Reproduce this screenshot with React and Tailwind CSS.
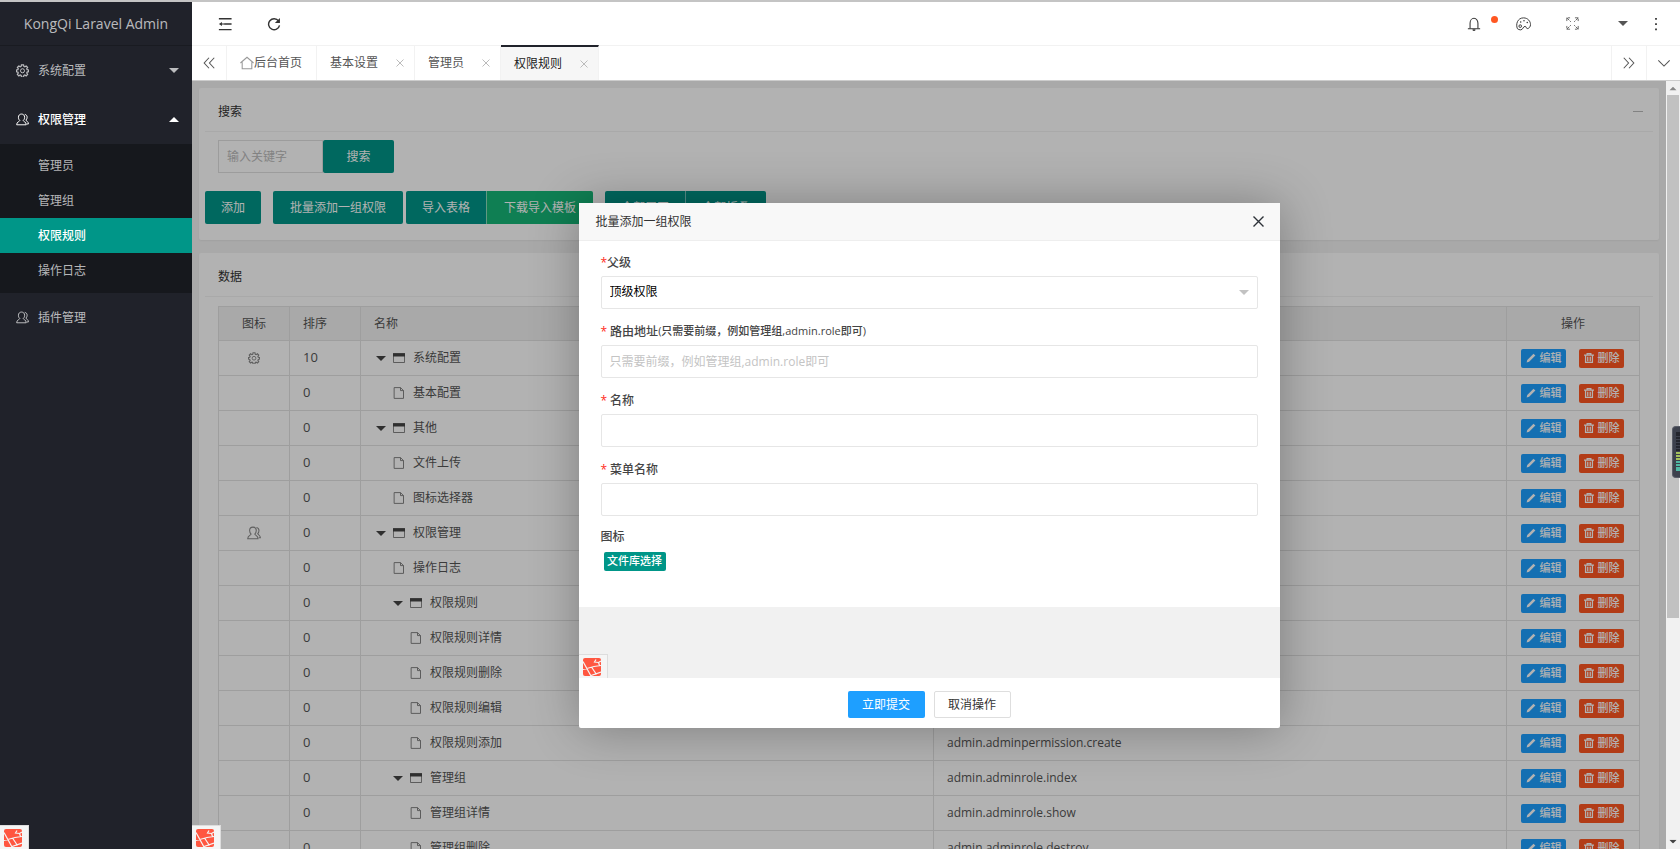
import { useState } from "react";

const menus = [
  { name: "系统配置", icon: "gear", children: [] },
  {
    name: "权限管理",
    icon: "user",
    open: true,
    children: ["管理员", "管理组", "权限规则", "操作日志"],
  },
  { name: "插件管理", icon: "user" },
];

const tabs = ["基本设置", "管理员", "权限规则"];

const rows = [
  { name: "系统配置", sort: 10, level: 0, folder: true, icon: "gear", route: "admin.config" },
  { name: "基本配置", sort: 0, level: 0, route: "admin.config.index" },
  { name: "其他", sort: 0, level: 0, folder: true, route: "admin.other" },
  { name: "文件上传", sort: 0, level: 0, route: "admin.upload" },
  { name: "图标选择器", sort: 0, level: 0, route: "admin.icon" },
  { name: "权限管理", sort: 0, level: 0, folder: true, icon: "user", route: "admin.permission" },
  { name: "操作日志", sort: 0, level: 0, route: "admin.log.index" },
  { name: "权限规则", sort: 0, level: 1, folder: true, route: "admin.adminpermission.index" },
  { name: "权限规则详情", sort: 0, level: 1, route: "admin.adminpermission.show" },
  { name: "权限规则删除", sort: 0, level: 1, route: "admin.adminpermission.destroy" },
  { name: "权限规则编辑", sort: 0, level: 1, route: "admin.adminpermission.edit" },
  { name: "权限规则添加", sort: 0, level: 1, route: "admin.adminpermission.create" },
  { name: "管理组", sort: 0, level: 1, folder: true, route: "admin.adminrole.index" },
  { name: "管理组详情", sort: 0, level: 1, route: "admin.adminrole.show" },
  { name: "管理组删除", sort: 0, level: 1, route: "admin.adminrole.destroy" },
];

function Svg({ size = 14, className = "", children }) {
  return (
    <svg
      width={size}
      height={size}
      viewBox="0 0 16 16"
      fill="none"
      stroke="currentColor"
      strokeWidth="1.2"
      className={`shrink-0 ${className}`}
      aria-hidden="true"
    >
      {children}
    </svg>
  );
}

function GearIcon({ size, className }) {
  return (
    <Svg size={size} className={className}>
      <path
        d="M6.7 1h2.6l.4 2 1.1.5 1.7-1.1 1.8 1.8-1.1 1.7.5 1.1 1.8.3v2.2l-1.8.4-.5 1.2 1.1 1.7-1.8 1.8-1.7-1.1-1.1.5-.4 2H6.7l-.4-2-1.1-.5-1.7 1.1-1.8-1.8 1.1-1.7-.5-1.2L.6 9.5V7.3l1.7-.3.5-1.1-1.1-1.7 1.8-1.8 1.7 1.1L6.3 3z"
        strokeWidth="1.5"
      />
      <circle cx="8" cy="8.3" r="2.5" />
    </Svg>
  );
}

function UserIcon({ size, className }) {
  return (
    <Svg size={size} className={className}>
      <path d="M4.7 9.2C3.4 8.2 3 6.8 3 5.2 3 2.8 4.6 1.3 6.8 1.3s3.8 1.5 3.8 3.9c0 1.6-.4 3-1.7 4 0 1.3 3.7 1.5 3.7 5.3H.8c0-3.8 3.9-4 3.9-5.3z" />
      <path d="M10.8 1.7c1.8.3 2.9 1.7 2.9 3.5 0 1.5-.5 2.7-1.5 3.5 0 1.2 3.1 1.4 3.1 4.8h-2" />
    </Svg>
  );
}

function Caret({ up, className = "" }) {
  return (
    <svg width="10" height="5" viewBox="0 0 10 5" fill="currentColor" className={`shrink-0 ${className}`} aria-hidden="true">
      <path d={up ? "M0 5h10L5 0z" : "M0 0h10L5 5z"} />
    </svg>
  );
}

function FolderIcon() {
  return (
    <Svg size={12} className="text-[#777]">
      <path d="M.6 3h14.8v11H.6z" />
      <path d="M0 1.5h16V6H0z" fill="#444" stroke="none" />
    </Svg>
  );
}

function FileIcon() {
  return (
    <Svg size={12} className="text-[#777]">
      <path d="M1.5.8h8.5l4 4v10.4H1.5z" />
      <path d="M10 .8v4h4" />
    </Svg>
  );
}

function TabClose() {
  return (
    <svg width="8" height="8" viewBox="0 0 8 8" fill="none" stroke="currentColor" aria-hidden="true">
      <path d="M.5.5l7 7M7.5.5l-7 7" />
    </svg>
  );
}

function DoubleChevron({ right }) {
  return (
    <Svg size={14}>
      <path d={right ? "M2 2l5.5 6L2 14M8 2l5.5 6L8 14" : "M8 2L2.5 8 8 14M14 2L8.5 8l5.5 6"} />
    </Svg>
  );
}

function LaravelBadge() {
  return (
    <a href="#debug" aria-label="debug" className="block border-t border-r border-[#ddd] bg-[#f5f5f5] pt-[3px] pr-[6px] pb-[2px] pl-1">
      <svg width="18" height="18" viewBox="0 0 18 18" aria-hidden="true">
        <rect width="18" height="18" rx="2" fill="#ff5640" />
        <path
          d="M0 3.5L8 18M0 11.5l11-3 7-1M8.500 9l5 7.500M13 1.500L11.500 4l4 .5L18 3M8 17.500l10-3.500M15.500 4.500l1 3"
          fill="none"
          stroke="#f5f5f5"
          strokeWidth="1.2"
        />
      </svg>
    </a>
  );
}

function Sidebar() {
  return (
    <aside className="relative flex w-48 shrink-0 flex-col bg-[#20222a] text-white/70">
      <div className="flex h-11 items-center justify-center border-b border-black/20 text-sm">
        KongQi Laravel Admin
      </div>
      <nav>
        {menus.map((m) => (
          <div key={m.name}>
            <button className={`flex h-[49px] w-full items-center gap-[9px] pr-[13px] pl-4 ${m.open ? "font-medium text-white" : ""}`}>
              {m.icon === "gear" ? <GearIcon size={13} /> : <UserIcon size={13} />}
              {m.name}
              {m.children && <Caret up={m.open} className="ml-auto" />}
            </button>
            {m.open && (
              <div className="bg-[#16181d] pt-1 pb-[5px]">
                {m.children.map((c) => (
                  <a
                    key={c}
                    href="#menu"
                    className={`flex h-[35px] items-center pl-[38px] ${c === "权限规则" ? "bg-[#009688] font-medium text-white" : ""}`}
                  >
                    {c}
                  </a>
                ))}
              </div>
            )}
          </div>
        ))}
      </nav>
      <div className="absolute bottom-0 left-0">
        <LaravelBadge />
      </div>
    </aside>
  );
}

function Header() {
  return (
    <header className="flex h-11 shrink-0 items-center justify-between border-b border-[#f2f2f2] pr-[17px] pl-[26px] text-[#333]">
      <div className="flex items-center gap-[35px]">
        <button aria-label="收起菜单">
          <Svg size={14}>
            <path d="M1 2h14.5M7 8h8.5M1 14.5h14.5" strokeWidth="1.5" />
            <path d="M1 8l3.5-2.3v4.6z" fill="currentColor" stroke="none" />
            <path d="M4 8h3" />
          </Svg>
        </button>
        <button aria-label="刷新">
          <Svg size={14}>
            <path d="M13.2 4.5A6.3 6.3 0 1 0 14.3 9.5" strokeWidth="1.6" />
            <path d="M14.8 1v5.8H9z" fill="currentColor" stroke="none" />
          </Svg>
        </button>
      </div>
      <div className="flex items-center">
        <button aria-label="消息" className="relative mr-[35px]">
          <Svg size={14}>
            <path d="M3.5 13V7a4.5 5.5 0 0 1 9 0v6" />
            <path d="M1 13.5h14M6.5 14.5q1.5 1.5 3 0" />
          </Svg>
          <span className="absolute -top-px -right-[17px] size-[7px] rounded-full bg-[#ff5722]" />
        </button>
        <button aria-label="主题" className="mr-[35px]">
          <Svg size={15}>
            <path
              d="M1.5 13.5C-.5 9 1.5 2 8 2c5 0 7.5 4 7.5 7.2 0 2.300-1.800 4.300-3.500 4.200-1.500-.2-.8-2.300-2.300-2.400C7.500 11 7.500 14.800 5 14.800c-1.500 0-2.500-.5-3.500-1.300z"
              strokeWidth="1"
            />
            <circle cx="5" cy="6.5" r=".8" fill="currentColor" stroke="none" />
            <circle cx="8.500" cy="5" r=".8" fill="currentColor" stroke="none" />
            <circle cx="12" cy="7" r=".8" fill="currentColor" stroke="none" />
            <circle cx="4.5" cy="10.8" r="1.4" strokeWidth="1" />
          </Svg>
        </button>
        <button aria-label="全屏" className="mr-[39px] text-[#666]">
          <Svg size={13}>
            <path d="M1 5V1h4M11 1h4v4M15 11v4h-4M5 15H1v-4M1 1l5 5M15 1l-5 5M15 15l-5-5M1 15l5-5" strokeDasharray="4 1" />
          </Svg>
        </button>
        <button aria-label="用户" className="mr-[21px] text-[#555]">
          <Caret />
        </button>
        <button aria-label="更多" className="w-[14px]">
          <Svg size={14}>
            <path d="M7 2h2M7 8h2M7 14h2" strokeWidth="2" />
          </Svg>
        </button>
      </div>
    </header>
  );
}

function TabBar() {
  return (
    <div className="flex h-[35px] shrink-0 items-stretch border-b border-[#ccc] text-[#555]">
      <button aria-label="向左" className="flex w-[35px] items-center justify-center border-r border-[#f2f2f2]">
        <DoubleChevron />
      </button>
      <a href="#home" className="flex items-center border-r border-[#f2f2f2] pr-[14px] pl-[13px]">
        <Svg size={14} className="text-[#999]">
          <path d="M.5 8L8 1.5 15.5 8M2.5 7v7.5h11V7" />
        </Svg>
        后台首页
      </a>
      {tabs.map((t) => (
        <div
          key={t}
          className={`flex items-center gap-[18px] border-r border-[#f2f2f2] pr-[10px] pl-[13px] ${
            t === "权限规则" ? "-mt-px border-t-2 border-t-[#20222a] bg-[#f6f6f6] text-[#222]" : ""
          }`}
        >
          <a href="#tab">{t}</a>
          <button aria-label={`关闭${t}`} className="text-[#bbb]">
            <TabClose />
          </button>
        </div>
      ))}
      <button aria-label="向右" className="ml-auto flex w-[35px] items-center justify-center border-l border-[#f2f2f2]">
        <DoubleChevron right />
      </button>
      <button aria-label="页签操作" className="flex w-[34px] items-center justify-center border-l border-[#f2f2f2]">
        <Svg size={14}>
          <path d="M1.5 5L8 11.5 14.5 5" />
        </Svg>
      </button>
    </div>
  );
}

function SearchCard() {
  return (
    <section className="rounded-xs bg-white px-[6px] pb-4 shadow-xs">
      <div className="flex h-11 items-center justify-between border-b border-[#f3f3f3] pt-1 pr-[10px] pl-[13px] text-[#333]">
        <h2>搜索</h2>
        <button aria-label="收起" className="h-px w-[10px] bg-[#bbb]" />
      </div>
      <form className="flex px-[13px] pt-2" onSubmit={(e) => e.preventDefault()}>
        <input
          aria-label="关键字"
          placeholder="输入关键字"
          className="h-[33px] w-[105px] border border-[#e0e0e0] px-2 placeholder:text-[#bbb]"
        />
        <button className="h-[33px] w-[71px] rounded-xs bg-[#009688] text-white">搜索</button>
      </form>
      <div className="mt-[18px] flex h-[33px] text-white">
        <button className="mr-3 rounded-xs bg-[#009688] px-4">添加</button>
        <button className="mr-[3px] rounded-xs bg-[#009688] px-[17px]">批量添加一组权限</button>
        <button className="rounded-l-xs bg-[#009688] px-4">导入表格</button>
        <button className="mr-3 rounded-r-xs border-l border-white/50 bg-[#16b777] px-[17px]">下载导入模板</button>
        <button className="rounded-l-xs bg-[#009688] px-4">全部展开</button>
        <button className="rounded-r-xs border-l border-white/50 bg-[#009688] px-4">全部折叠</button>
      </div>
    </section>
  );
}

function RowActions() {
  return (
    <div className="flex gap-[13px] pl-[14px] text-[11px] font-medium text-white">
      <button className="flex h-[19px] w-[45px] items-center justify-center gap-1 rounded-xs bg-[#1e9fff]">
        <Svg size={10}>
          <path d="M1 15l1-4L12 1l3 3L5 14z" fill="currentColor" stroke="none" />
        </Svg>
        编辑
      </button>
      <button className="flex h-[19px] w-[45px] items-center justify-center gap-1 rounded-xs bg-[#ff5722]">
        <Svg size={10}>
          <path d="M0 3.5h16M5 3V1h6v2M2.5 4v11h11V4M6 6v7M10 6v7" strokeWidth="2" />
        </Svg>
        删除
      </button>
    </div>
  );
}

function DataCard() {
  return (
    <section className="rounded-xs bg-white px-[6px] shadow-xs">
      <h2 className="flex h-11 items-center border-b border-[#f3f3f3] px-[13px] pt-1 text-[#333]">数据</h2>
      <div className="px-[13px] pt-[9px] pb-4 text-[#555]">
        <table className="w-full table-fixed border-collapse">
          <thead>
            <tr className="h-[34px] bg-[#f2f2f2] text-left">
              <th className="w-[71px] border border-[#e2e2e2] text-center font-normal">图标</th>
              <th className="w-[71px] border border-[#e2e2e2] px-[13px] font-normal">排序</th>
              <th className="border border-[#e2e2e2] px-[13px] font-normal">名称</th>
              <th className="border border-[#e2e2e2] px-[13px] font-normal">路由地址</th>
              <th className="w-[133px] border border-[#e2e2e2] text-center font-normal">操作</th>
            </tr>
          </thead>
          <tbody>
            {rows.map((r) => (
              <tr key={r.route} className="h-[35px]">
                <td className="border border-[#e2e2e2] text-[#888]">
                  {r.icon === "gear" && <GearIcon size={12} className="mx-auto" />}
                  {r.icon === "user" && <UserIcon size={14} className="mx-auto" />}
                </td>
                <td className="border border-[#e2e2e2] px-[13px] text-[13px]">{r.sort}</td>
                <td className="border border-[#e2e2e2]">
                  <div className={`flex items-center ${r.level ? "pl-8" : "pl-[15px]"}`}>
                    <Caret className={`mr-[7px] text-[#444] ${r.folder ? "" : "invisible"}`} />
                    {r.folder ? <FolderIcon /> : <FileIcon />}
                    <span className="ml-2">{r.name}</span>
                  </div>
                </td>
                <td className="border border-[#e2e2e2] px-[13px]">{r.route}</td>
                <td className="border border-[#e2e2e2]">
                  <RowActions />
                </td>
              </tr>
            ))}
          </tbody>
        </table>
      </div>
    </section>
  );
}

function Field({ id, label, hint, tight, children }) {
  return (
    <div className="mb-[10px]">
      <label htmlFor={id} className="flex h-[26px] items-center font-medium text-[#444]">
        <span className={`text-[#ff2a1a] ${tight ? "" : "mr-[3px]"}`}>*</span>
        {label}
        {hint && <span className="text-[11px]">{hint}</span>}
      </label>
      {children}
    </div>
  );
}

const inputStyle = "block h-[33px] w-full rounded-xs border border-[#e6e6e6] bg-white px-2 text-black placeholder:text-[#c4c4c4]";

function PermissionModal() {
  const [form, setForm] = useState({ parent: "0", route: "", name: "", menu: "" });
  const update = (e) => setForm({ ...form, [e.target.name]: e.target.value });

  return (
    <div role="dialog" aria-label="批量添加一组权限" className="flex w-[701px] max-w-full flex-col rounded-xs bg-white shadow-[1px_1px_50px_rgba(0,0,0,0.3)]">
      <div className="flex h-[38px] items-center justify-between border-b border-[#eee] bg-[#f8f8f8] pt-px pr-4 pl-[17px] text-[#333]">
        <h2>批量添加一组权限</h2>
        <button aria-label="关闭">
          <svg width="11" height="11" viewBox="0 0 11 11" fill="none" stroke="#2d3238" strokeWidth="1.4" aria-hidden="true">
            <path d="M.5.5l10 10M10.5.5l-10 10" />
          </svg>
        </button>
      </div>
      <form className="px-[22px] pt-[9px] pb-9" onSubmit={(e) => e.preventDefault()}>
        <Field id="parent" label="父级" tight>
          <div className="relative">
            <select id="parent" name="parent" value={form.parent} onChange={update} className={`${inputStyle} appearance-none`}>
              <option value="0">顶级权限</option>
            </select>
            <Caret className="pointer-events-none absolute top-[14px] right-[9px] text-[#c2c2c2]" />
          </div>
        </Field>
        <Field id="route" label="路由地址" hint="(只需要前缀，例如管理组,admin.role即可)">
          <input
            id="route"
            name="route"
            value={form.route}
            onChange={update}
            placeholder="只需要前缀，例如管理组,admin.role即可"
            className={inputStyle}
          />
        </Field>
        <Field id="name" label="名称">
          <input id="name" name="name" value={form.name} onChange={update} className={inputStyle} />
        </Field>
        <Field id="menu" label="菜单名称">
          <input id="menu" name="menu" value={form.menu} onChange={update} className={inputStyle} />
        </Field>
        <div className="mb-[3px] flex h-[23px] items-center font-medium text-[#444]">图标</div>
        <button className="ml-[3px] block h-[19px] w-[62px] rounded-xs bg-[#009688] text-[11px] font-medium text-white">
          文件库选择
        </button>
      </form>
      <div className="flex h-[71px] items-end bg-[#f1f1f1]">
        <LaravelBadge />
      </div>
      <div className="flex h-[50px] items-center justify-center gap-[9px] pt-1">
        <button className="h-[27px] w-[77px] rounded-xs bg-[#1e9fff] text-white">立即提交</button>
        <button className="h-[27px] w-[77px] rounded-xs border border-[#dedede] text-[#333]">取消操作</button>
      </div>
    </div>
  );
}

function Scrollbar() {
  return (
    <div className="flex w-[14px] shrink-0 flex-col items-center justify-between bg-[#f1f1f1] py-[5px] text-[#888]">
      <Caret up className="scale-75" />
      <div className="mt-1 mb-auto h-[69%] w-3 bg-[#c1c1c1]" />
      <Caret className="scale-75 text-[#444]" />
    </div>
  );
}

function SideMeter() {
  return (
    <div className="absolute top-1/2 right-0 h-[52px] w-2 rounded-l-sm border border-r-0 border-[#5a5d68] bg-[#3d414d] py-[5px] pl-[3px]">
      <div className="flex h-full flex-col justify-between">
        {Array.from({ length: 14 }, (_, i) => (
          <span key={i} className={`h-[2px] ${i < 7 ? "bg-[#23252d]" : i < 10 ? "bg-[#a5c25c]" : "bg-[#4fb8a5]"}`} />
        ))}
      </div>
    </div>
  );
}

export default function App() {
  return (
    <div className="relative flex h-screen overflow-hidden border-t-2 border-[#c4c4c4] bg-white font-['Open_Sans','Noto_Sans_CJK_SC',sans-serif] text-xs">
      <Sidebar />
      <div className="flex min-w-0 flex-1 flex-col">
        <Header />
        <TabBar />
        <div className="flex min-h-0 flex-1">
          <main className="relative min-w-0 flex-1 overflow-hidden bg-[#f2f2f2]">
            <div className="flex flex-col gap-[13px] px-[7px] pt-[7px]">
              <SearchCard />
              <DataCard />
            </div>
            <div className="absolute inset-0 flex items-center justify-center bg-black/30">
              <PermissionModal />
            </div>
            <div className="absolute bottom-0 left-0">
              <LaravelBadge />
            </div>
          </main>
          <Scrollbar />
        </div>
      </div>
      <SideMeter />
    </div>
  );
}
